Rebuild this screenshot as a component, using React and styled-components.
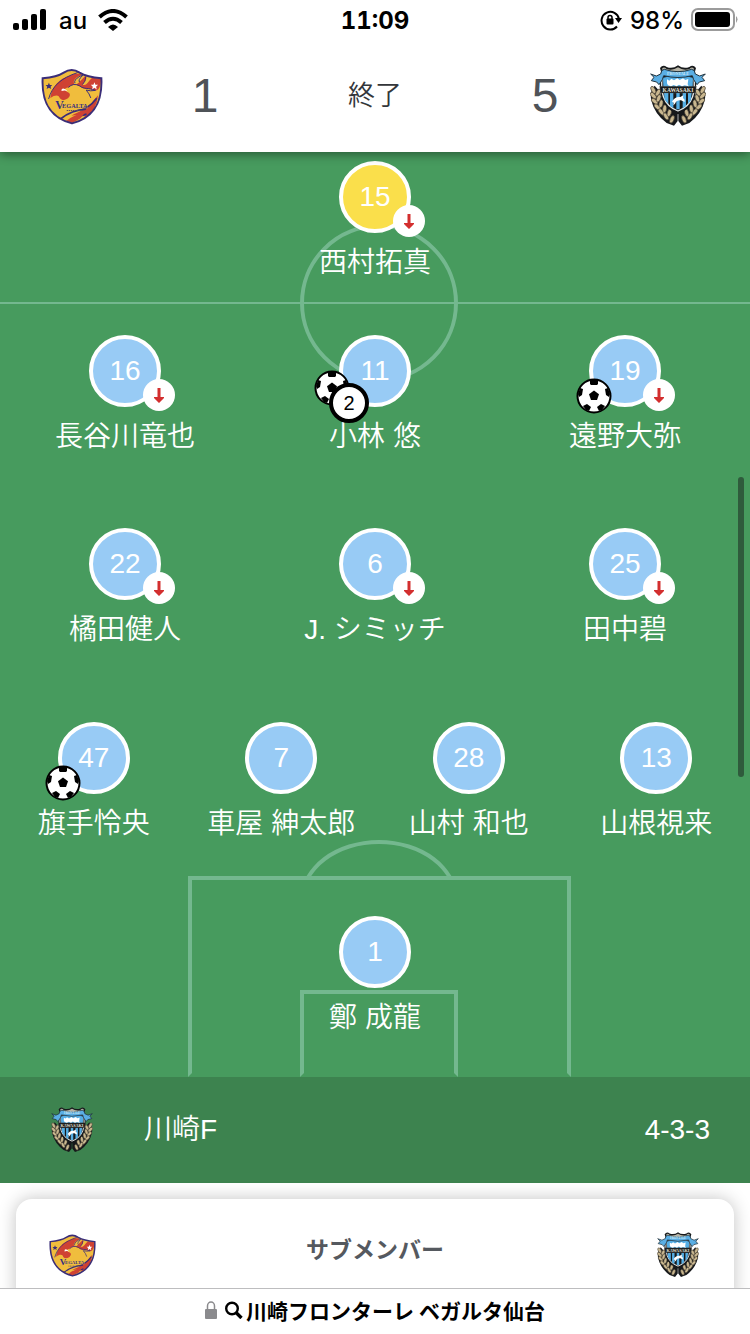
import React from 'react';
import styled, { createGlobalStyle } from 'styled-components';

const GlobalStyle = createGlobalStyle`
  * { box-sizing: border-box; }
  body {
    margin: 0;
    background: #fff;
    font-family: "Liberation Sans", "Noto Sans CJK JP", sans-serif;
  }
  h1, h2, p, ul { margin: 0; padding: 0; font-weight: inherit; }
  ul { list-style: none; }
`;

const Screen = styled.div`
  display: flex;
  flex-direction: column;
  height: 100vh;
  overflow: hidden;
`;

const StatusBar = styled.div`
  position: relative;
  z-index: 3;
  display: grid;
  grid-template-columns: 1fr auto 1fr;
  align-items: center;
  flex: none;
  height: 40px;
  padding: 0 12px;
  background: #fff;
  font-family: Inter, sans-serif;
  font-size: 24px;
  font-weight: 500;
  color: #000;
  svg { display: block; flex: none; }
`;

const StatusGroup = styled.div`
  display: flex;
  align-items: center;
  justify-content: ${(p) => (p.$end ? 'flex-end' : 'flex-start')};
  gap: ${(p) => (p.$end ? 6 : 11)}px;
`;

const Clock = styled.time`
  font-weight: 700;
  font-variant-numeric: tabular-nums;
`;

const ScoreHeader = styled.header`
  position: relative;
  z-index: 2;
  display: grid;
  grid-template-columns: 144px 122px 1fr 122px 144px;
  align-items: center;
  justify-items: center;
  flex: none;
  height: 112px;
  background: #fff;
  color: #4f5358;
  box-shadow: 0 2px 10px rgba(0, 0, 0, 0.45);
`;

const Score = styled.span`
  font-size: 48px;
  line-height: 56px;
`;

const MatchState = styled.span`
  font-size: 27px;
  line-height: 40px;
  font-weight: 350;
  color: #33363a;
`;

const Content = styled.main`
  flex: 1;
  min-height: 0;
  overflow: hidden;
`;

const Pitch = styled.section`
  position: relative;
  display: grid;
  grid-template-rows: 174px 193px 194px 194px 161px;
  padding-top: 9px;
  background: #479b5e;
  color: #fff;
`;

const Marking = styled.div`
  position: absolute;
  box-sizing: content-box;
  border: 0 solid #74b88f;
`;

const HalfwayLine = styled(Marking)`
  top: 150px;
  left: 0;
  right: 0;
  border-top-width: 2px;
`;

const CentreCircle = styled(Marking)`
  top: 72px;
  left: 40%;
  width: 20%;
  aspect-ratio: 1;
  border-width: 4px;
  border-radius: 50%;
`;

const Box = styled(Marking)`
  bottom: 0;
  left: ${(p) => p.$left};
  width: ${(p) => p.$width};
  height: ${(p) => p.$height}px;
  border-width: 4px;
  border-bottom-color: transparent;
`;

const ArcClip = styled.div`
  position: absolute;
  left: 40%;
  width: calc(20% + 8px);
  bottom: 201px;
  height: 36px;
  overflow: hidden;
`;

const Arc = styled.div`
  height: 120px;
  border: 4px solid #74b88f;
  border-radius: 50%;
`;

const Line = styled.ul`
  position: relative;
  display: flex;
  align-items: flex-start;
`;

const PlayerItem = styled.li`
  flex: 1;
  display: flex;
  flex-direction: column;
  align-items: center;
  gap: 10px;
`;

const Shirt = styled.div`
  position: relative;
  display: flex;
  align-items: center;
  justify-content: center;
  width: 72px;
  height: 72px;
  border: 4px solid #fff;
  border-radius: 50%;
  background: ${(p) => (p.$keeperColour ? '#fadf4b' : '#98cbf5')};
  font-size: 28px;
  line-height: 32px;
`;

const PlayerName = styled.span`
  font-size: 28px;
  line-height: 40px;
  font-weight: 350;
  white-space: nowrap;
`;

const SubOff = styled.span`
  position: absolute;
  left: 50px;
  top: 40px;
  display: flex;
  align-items: center;
  justify-content: center;
  width: 32px;
  height: 32px;
  border-radius: 50%;
  background: #fff;
`;

const Goal = styled.span`
  position: absolute;
  left: ${(p) => (p.$stacked ? -29 : -17)}px;
  top: ${(p) => (p.$stacked ? 31 : 39)}px;
  svg { display: block; }
`;

const GoalCount = styled.span`
  position: absolute;
  left: -14px;
  top: 44px;
  display: flex;
  align-items: center;
  justify-content: center;
  width: 40px;
  height: 40px;
  border: 4px solid #000;
  border-radius: 50%;
  background: #fff;
  color: #000;
  font-size: 20px;
  line-height: 24px;
`;

const TeamBar = styled.section`
  display: grid;
  grid-template-columns: 144px 1fr auto;
  align-items: center;
  height: 106px;
  padding-right: 40px;
  background: #3d834f;
  color: #fff;
  font-size: 28px;
  line-height: 40px;
  > svg { justify-self: center; }
`;

const TeamName = styled.h2`
  font-size: 28px;
  font-weight: 350;
`;

const SubsCard = styled.section`
  display: grid;
  grid-template-columns: 112px 1fr 112px;
  align-items: center;
  justify-items: center;
  margin: 16px 16px 0;
  height: 112px;
  border-radius: 16px;
  background: #fff;
  box-shadow: 0 0 18px rgba(0, 0, 0, 0.24);
`;

const SubsTitle = styled.h2`
  padding-bottom: 10px;
  font-size: 23px;
  line-height: 32px;
  font-weight: 700;
  color: #55595f;
`;

const ScrollThumb = styled.div`
  position: fixed;
  z-index: 3;
  right: 6px;
  top: 477px;
  width: 6px;
  height: 300px;
  border-radius: 3px;
  background: #2f5b3c;
`;

const AddressBar = styled.button`
  position: relative;
  z-index: 2;
  display: flex;
  align-items: center;
  justify-content: center;
  flex: none;
  width: 100%;
  height: 46px;
  padding: 0 0 4px;
  border: 0;
  border-top: 1px solid #bdbdbf;
  background: #fff;
  color: #000;
  font-family: "Noto Sans CJK JP", sans-serif;
  font-size: 21px;
  line-height: 32px;
  font-weight: 700;
`;

const AddressIcon = styled.svg`
  flex: none;
  margin-right: ${(p) => p.$gap}px;
`;

function VegaltaCrest({ width, height }) {
  return (
    <svg width={width} height={height} viewBox="15 21 188 171" aria-hidden="true">
      <path d="M20 51 Q64 47 84 34 Q108 18 132 34 Q154 47 198 51 C201 112 185 168 109 188 C33 168 17 112 20 51Z" fill="#f0bd3d" />
      <path d="M43 111 C48 76 72 51 100 44 C120 35 136 38 140 40 C122 48 112 57 115 66 Q118 76 130 64 L149 44 Q155 48 150 58 L141 69 Q148 78 162 58 L170 50 L197 53 C197 74 190 91 178 88 C162 81 146 87 133 76 C119 69 106 69 98 79 C84 80 85 88 98 94 Q108 100 97 112 Q81 123 72 112 C70 102 60 99 43 111Z" fill="#cf4233" />
      <path d="M38 114 C49 75 75 51 126 34 M98 79 Q113 64 132 74 C145 86 160 79 180 88 Q164 91 152 87 Q162 98 166 111" fill="none" stroke="#3a2d78" strokeWidth="3" />
      <path d="M118 66 Q113 57 133 45 L142 42 Q126 57 132 63 M141 70 Q150 62 151 46" fill="none" stroke="#3a2d78" strokeWidth="3" />
      <path d="M90 85 Q76 77 77 90 Q88 86 96 91Z" fill="#fff" />
      <path d="M107 165 C130 151 156 147 174 119 L188 103 Q184 147 151 169 Q132 158 107 165Z" fill="#cf4233" />
      <path d="M75 174 Q108 148 151 145 M104 184 Q125 166 153 160 M122 150 Q158 147 184 112" fill="none" stroke="#3a2d78" strokeWidth="5" />
      <path d="M91 181 Q117 160 149 155 L134 173 L109 187Z" fill="#cf4233" />
      <path d="M39 65 L42 72 L49 72 L44 77 L46 84 L39 80 L32 84 L34 77 L29 72 L36 72Z" fill="#3a2d78" />
      <path d="M177 63 L180 71 L188 71 L182 77 L184 85 L177 80 L170 85 L172 77 L166 71 L174 71Z" fill="#fff" />
      <path d="M20 51 Q64 47 84 34 Q108 18 132 34 Q154 47 198 51 C201 112 185 168 109 188 C33 168 17 112 20 51Z" fill="none" stroke="#3a2d78" strokeWidth="6" />
      <text x="58" y="144" fill="#342d80" stroke="#f0bd3d" strokeWidth="2" paintOrder="stroke" fontFamily="Liberation Serif, serif" fontWeight="700" fontSize="36">V</text>
      <text x="79" y="140" fill="#342d80" stroke="#f0bd3d" strokeWidth="2" paintOrder="stroke" fontFamily="Liberation Serif, serif" fontWeight="700" fontSize="19">EGALTA</text>
      <path d="M93 149 H142" stroke="#5d4b62" strokeWidth="3" strokeDasharray="4 2" />
    </svg>
  );
}

const LEAVES = [
  [34, 91, -28], [34, 108, -42], [38, 125, -48], [46, 142, -48], [58, 157, -42], [72, 170, -30],
  [48, 99, 30], [50, 116, 20], [57, 132, 12], [68, 147, 8], [82, 159, 16], [90, 179, 22],
];

function Laurel({ flip }) {
  return (
    <g transform={flip ? 'translate(216 0) scale(-1 1)' : undefined}>
      <path d="M38 78 Q22 96 28 123 Q38 163 74 190 L96 198 L107 184 L107 154 Q66 140 50 92Z" fill="#17191b" />
      {LEAVES.map(([x, y, r]) => (
        <ellipse key={`${x}-${y}`} cx={x} cy={y} rx="6" ry="12" transform={`rotate(${r} ${x} ${y})`} fill="#c9b78f" stroke="#443d31" strokeWidth="2" />
      ))}
    </g>
  );
}

function FrontaleCrest({ width, height }) {
  return (
    <svg width={width} height={height} viewBox="24 16 168 186" aria-hidden="true">
      <Laurel />
      <Laurel flip />
      <path d="M54 25 Q63 13 74 22 Q92 29 108 17 Q124 29 142 22 Q153 13 162 25 L157 43 C168 79 167 143 108 164 C49 143 48 79 59 43Z" fill="#17191b" />
      <path d="M60 27 Q67 19 74 28 Q92 34 108 23 Q124 34 142 28 Q149 19 156 27 L151 40 H65Z" fill="#b8b5a7" />
      <path d="M61 47 C55 94 60 136 108 154 C156 136 161 94 155 47Z" fill="#17191b" stroke="#e5e8e8" strokeWidth="4" />
      <path d="M63 54 Q108 42 153 54 L152 82 H64Z" fill="#55aee5" />
      <path d="M66 100 H79 V133 L68 120Z M84 100 H94 V145 L84 139Z M103 100 H113 V149 H103Z M122 100 H132 V139 L122 146Z M138 100 H149 L146 123 L138 133Z" fill="#55aee5" />
      <path d="M53 80 H163 L159 100 H57Z" fill="#17191b" stroke="#77776f" strokeWidth="1" />
      <path d="M26 43 L43 49 L56 43 Q57 30 67 29 Q108 43 149 29 Q159 30 160 43 L173 49 L190 43 L180 53 L188 63 L172 67 L165 75 L155 60 L151 48 Q108 59 65 48 L61 60 L51 75 L44 67 L28 63 L36 53Z" fill="#5aaee4" stroke="#21323c" strokeWidth="3" />
      <path d="M75 59 l7 4 6-6 8 5 10-6 7 5 10-5 7 5 9-3 -2 16 3 6-12-3-8 3-9-5-7 5-9-4-8 4-9-3-3-6Z" fill="#fff" />
      <path d="M90 126 Q98 110 115 112 L124 107 L123 115 Q130 120 128 127 L117 122 Q103 121 99 132 L94 137 L95 129Z" fill="#fff" />
      <text x="108" y="96" textAnchor="middle" fill="#e6e4da" fontFamily="Liberation Serif, serif" fontWeight="700" fontSize="17">KAWASAKI</text>
      <text x="108" y="46" textAnchor="middle" fill="#d3ebf8" fontFamily="Liberation Serif, serif" fontWeight="700" fontSize="12">FRONTALE</text>
    </svg>
  );
}

function Football() {
  return (
    <svg width="36" height="36" viewBox="0 0 36 36" role="img" aria-label="ゴール">
      <circle cx="18" cy="18" r="16.5" fill="#fff" stroke="#000" strokeWidth="2" />
      <path d="M18 12.5 L23 16.2 L21 22 H15 L13 16.2Z" />
      <path d="M14 2 H22 V6 L21 7 H15 L14 6Z M2 16 L4 10 L7 11 L6 17 L3 19Z M34 16 L32 10 L29 11 L30 17 L33 19Z M7 28 L11 26 L15 29 L13 33 L10 32Z M29 28 L25 26 L21 29 L23 33 L26 32Z" />
    </svg>
  );
}

function DownArrow() {
  return (
    <svg width="12" height="16" viewBox="0 0 12 16" role="img" aria-label="交代">
      <path d="M4.5 1 H7.5 V10 H11 V11 L6 16 L1 11 V10 H4.5Z" fill="#d32f2f" />
    </svg>
  );
}

const LINES = [
  [{ no: 15, name: '西村拓真', off: true, yellow: true }],
  [
    { no: 16, name: '長谷川竜也', off: true },
    { no: 11, name: '小林 悠', goals: 2 },
    { no: 19, name: '遠野大弥', off: true, goals: 1 },
  ],
  [
    { no: 22, name: '橘田健人', off: true },
    { no: 6, name: 'J. シミッチ', off: true },
    { no: 25, name: '田中碧', off: true },
  ],
  [
    { no: 47, name: '旗手怜央', goals: 1 },
    { no: 7, name: '車屋 紳太郎' },
    { no: 28, name: '山村 和也' },
    { no: 13, name: '山根視来' },
  ],
  [{ no: 1, name: '鄭 成龍' }],
];

function Player({ no, name, off, goals = 0, yellow }) {
  return (
    <PlayerItem>
      <Shirt $keeperColour={yellow}>
        {no}
        {goals > 0 && <Goal $stacked={goals > 1}><Football /></Goal>}
        {goals > 1 && <GoalCount>{goals}</GoalCount>}
        {off && <SubOff><DownArrow /></SubOff>}
      </Shirt>
      <PlayerName>{name}</PlayerName>
    </PlayerItem>
  );
}

export default function App() {
  return (
    <Screen lang="ja">
      <GlobalStyle />
      <StatusBar>
        <StatusGroup>
          <svg width="36" height="22" viewBox="0 0 36 22" aria-hidden="true">
            <rect x="1" y="14" width="6" height="7" rx="2" />
            <rect x="10" y="10" width="6" height="11" rx="2" />
            <rect x="19" y="5" width="6" height="16" rx="2" />
            <rect x="28" y="0" width="6" height="21" rx="2" />
          </svg>
          <span>au</span>
          <svg width="30" height="22" viewBox="0 0 30 22" aria-hidden="true">
            <path d="M1.5 8 Q15 -4 28.5 8 M6.5 13.5 Q15 6 23.5 13.5" fill="none" stroke="#000" strokeWidth="4" />
            <path d="M10 18 Q15 13 20 18 L15 22Z" />
          </svg>
        </StatusGroup>
        <Clock>11:09</Clock>
        <StatusGroup $end>
          <svg width="24" height="22" viewBox="0 0 24 22" aria-hidden="true">
            <path d="M17 17.5 A8.8 8.8 0 1 1 19 10" fill="none" stroke="#000" strokeWidth="2" />
            <path d="M15 9 H22 L18.500 14Z" />
            <rect x="6.500" y="9.500" width="7" height="6" rx="1" />
            <path d="M8 10 V8.500 A2 2 0 0 1 12 8.500 V10" fill="none" stroke="#000" strokeWidth="1.5" />
          </svg>
          <span>98%</span>
          <svg width="48" height="24" viewBox="0 0 48 24" aria-hidden="true">
            <rect x="2" y="1" width="42" height="21" rx="6" fill="none" stroke="#9b9b9b" strokeWidth="2" />
            <rect x="5" y="4" width="35" height="15" rx="3" />
            <path d="M46 8 Q49 11 46 15Z" fill="#9b9b9b" />
          </svg>
        </StatusGroup>
      </StatusBar>

      <ScoreHeader>
        <VegaltaCrest width={62} height={57} />
        <Score>1</Score>
        <MatchState>終了</MatchState>
        <Score>5</Score>
        <FrontaleCrest width={56} height={62} />
      </ScoreHeader>

      <Content>
        <Pitch>
          <HalfwayLine />
          <CentreCircle />
          <ArcClip><Arc /></ArcClip>
          <Box $left="25%" $width="50%" $height={193} />
          <Box $left="40%" $width="20%" $height={79} />
          {LINES.map((players) => (
            <Line key={players[0].no}>
              {players.map((player) => <Player key={player.no} {...player} />)}
            </Line>
          ))}
        </Pitch>
        <TeamBar>
          <FrontaleCrest width={42} height={46} />
          <TeamName>川崎F</TeamName>
          <p>4-3-3</p>
        </TeamBar>
        <SubsCard>
          <VegaltaCrest width={47} height={43} />
          <SubsTitle>サブメンバー</SubsTitle>
          <FrontaleCrest width={42} height={46} />
        </SubsCard>
      </Content>

      <ScrollThumb />
      <AddressBar type="button">
        <AddressIcon $gap={8} width="12" height="18" viewBox="0 0 12 18" aria-hidden="true">
          <rect x="0" y="8" width="12" height="10" rx="1" fill="#8a8a8d" />
          <path d="M2.500 9 V5 A3.500 4 0 0 1 9.500 5 V9" fill="none" stroke="#8a8a8d" strokeWidth="1.500" />
        </AddressIcon>
        <AddressIcon $gap={3} width="18" height="18" viewBox="0 0 18 18" aria-hidden="true">
          <circle cx="7" cy="7.500" r="5.800" fill="none" stroke="#000" strokeWidth="2.400" />
          <path d="M11 11.500 L16.500 17" stroke="#000" strokeWidth="3.400" />
        </AddressIcon>
        川崎フロンターレ ベガルタ仙台
      </AddressBar>
    </Screen>
  );
}
